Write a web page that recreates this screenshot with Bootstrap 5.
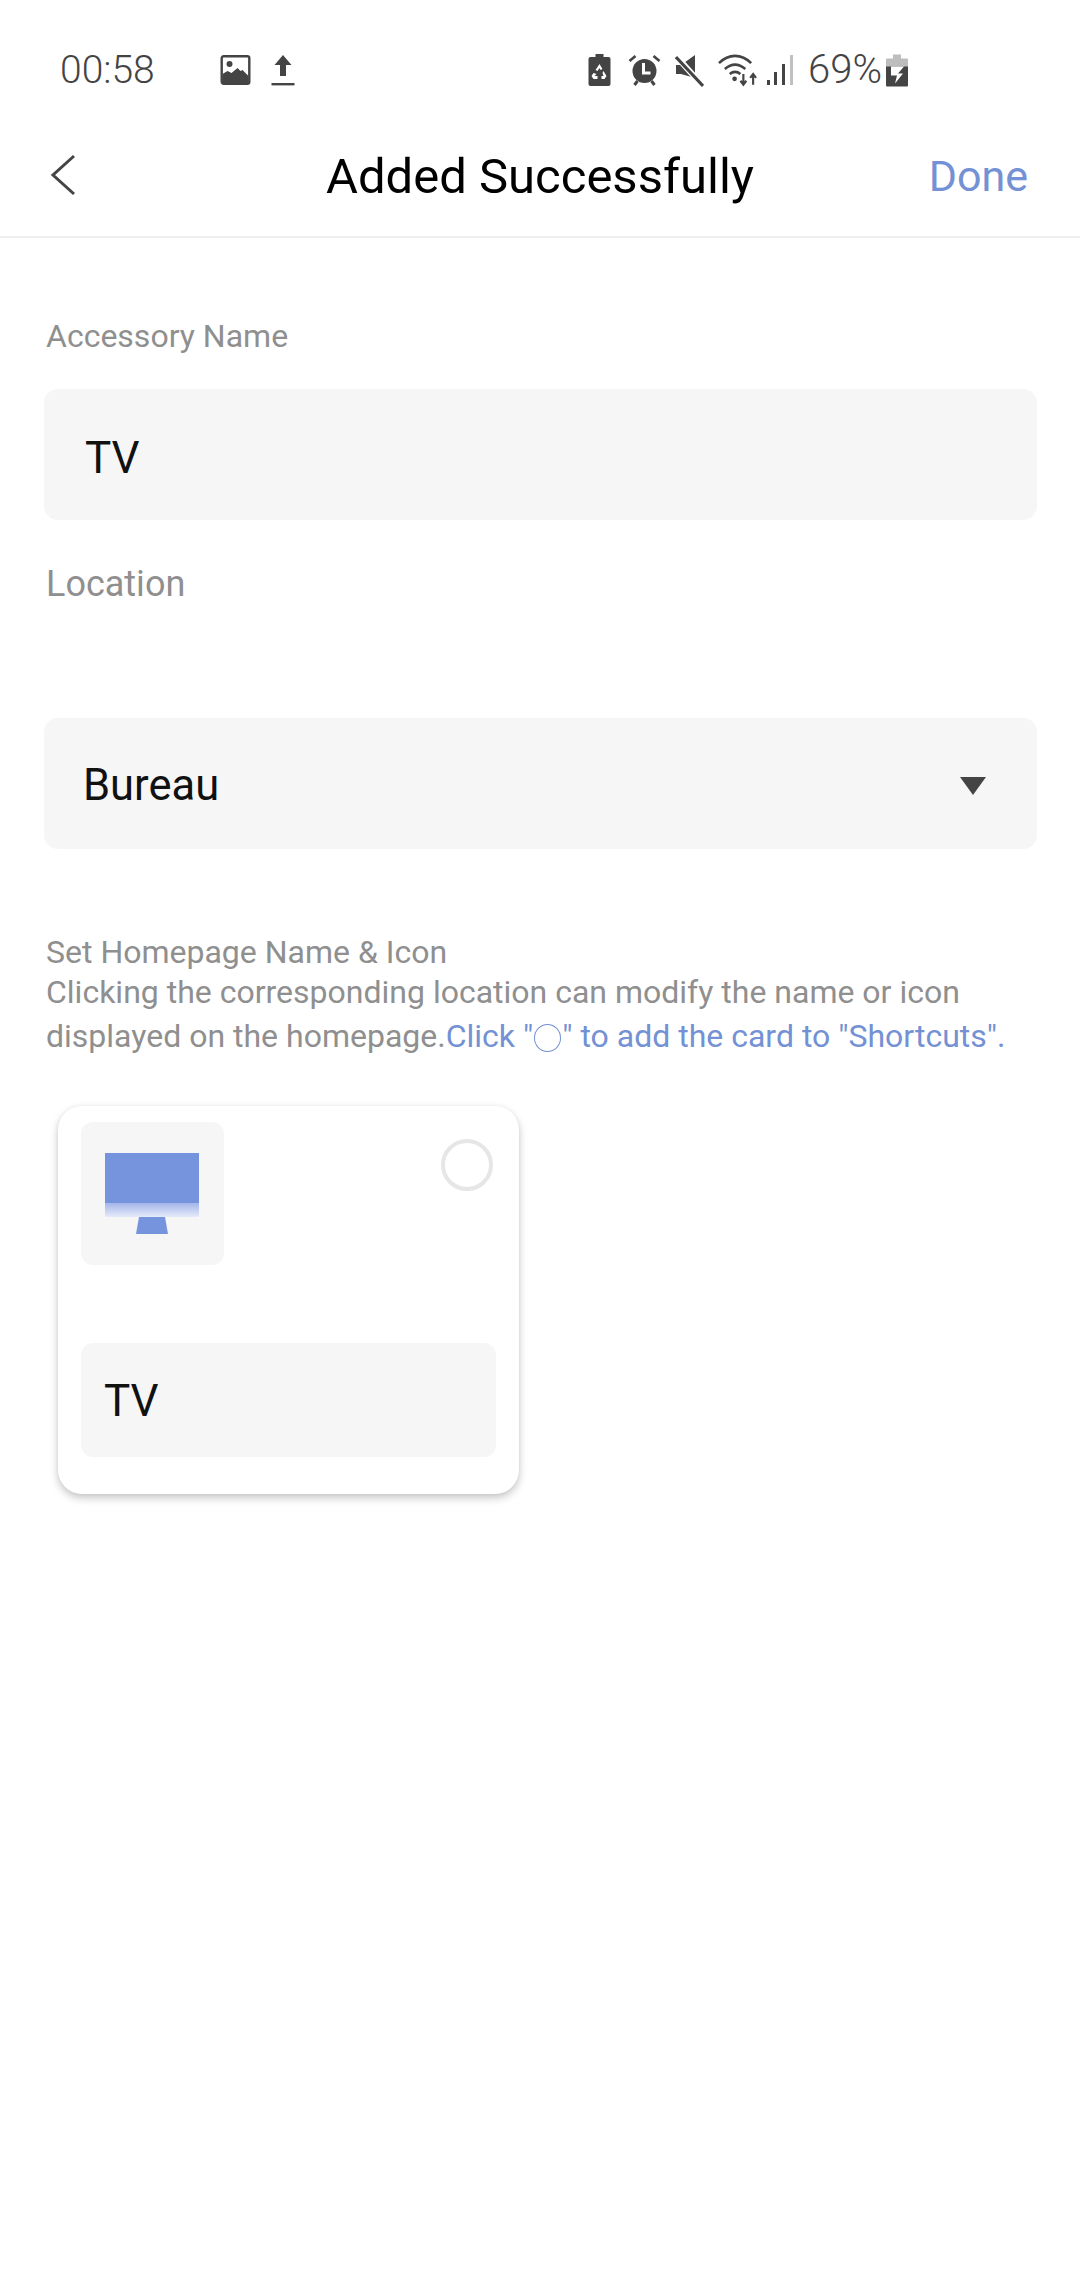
<!doctype html>
<html lang="en">
<head>
<meta charset="utf-8">
<title>Added Successfully</title>
<link href="https://cdn.jsdelivr.net/npm/bootstrap@5.3.0/dist/css/bootstrap.min.css" rel="stylesheet">
<style>
body{font-family:Roboto,"Liberation Sans",sans-serif;background:#fff;color:#000;width:1080px;height:2280px;overflow:hidden}
.sbar{height:70px;margin-top:35px;padding-left:60px;color:#444}
.sbar svg{display:block;flex:none}
.clock{font-size:39px;line-height:70px;width:160px;font-weight:300}
.pct{font-size:40px;line-height:70px;width:78px;margin-left:14px;font-weight:300}
.ic-up{margin-left:20px}
.spacer{width:293px}
.ic-alarm{margin-left:17px}
.ic-mute{margin-left:14px}
.ic-wifi{margin-left:14px}
.ic-sig{margin-left:9px}
.topbar{height:133px;border-bottom:2px solid #eeeeee;padding:8px 52px 0 50px}
.topbar h1{font-size:49px;font-weight:400;margin:0;position:absolute;left:0;right:0;text-align:center;pointer-events:none;line-height:133px;top:5px}
.topbar .wrap-back{width:26px}
.done{font-size:43px;color:#7391d4;text-decoration:none;line-height:125px;padding-top:3px}
.main{padding:0 43px 0 44px}
.lab{color:#8f8f8f;margin-left:2px}
.lab1{font-size:32px;line-height:40px;margin-top:78px;margin-bottom:33px}
.lab2{font-size:36px;line-height:44px;margin-top:42px;margin-bottom:112px}
.fieldbox{background:#f6f6f6;border-radius:14px;height:131px;padding:4px 39px 0;font-size:43.5px;color:#111}
.fieldbox.tv-val{padding-left:41px;padding-top:6px;font-size:44px}
.caret-ic{margin-right:12px}
.hint{font-size:32px;line-height:44px;color:#8f8f8f;margin:85px 0 0 2px;width:1000px}
.hint p{margin:0}
.hint .l1{line-height:36px}
.hint .blue{color:#7391d4}
.hint .ring{display:inline-block;width:27px;height:28px;border:1.5px solid #7391d4;border-radius:50%;vertical-align:-5px;margin:0 1px}
.acc{width:461px;height:388px;margin:48px 0 0 14px;padding:16px 23px 0;background:#fff;border-radius:24px;box-shadow:0 4px 8px rgba(0,0,0,.22),0 0 4px rgba(0,0,0,.05)}
.thumb{width:143px;height:143px;background:#f6f6f6;border-radius:12px}
.thumb svg{margin-right:2px}
.pick{width:52px;height:52px;border:4px solid #e6e6e6;border-radius:50%;margin:17px 3px 0 0}
.namebox{background:#f6f6f6;border-radius:12px;height:114px;margin-top:78px;padding:2px 0 0 23px;font-size:44px;color:#111}
</style>
</head>
<body>
<div class="sbar d-flex align-items-center">
  <span class="clock">00:58</span>
  <svg width="31" height="30" viewBox="0 0 30 30"><rect x="1.2" y="1.2" width="27.6" height="27.6" rx="2" fill="#fff" stroke="#444" stroke-width="2.4"/><circle cx="9" cy="9" r="3" fill="#444"/><path d="M2 28V19l5-3 4 2 6-5 3 3 2-1 6 6v7z" fill="#444"/></svg>
  <svg class="ic-up" width="24" height="32" viewBox="0 0 23 32"><path d="M11.5 1 20 11h-5.5v11h-6V11H3z" fill="#444"/><rect y="29" width="23" height="2.4" fill="#444"/></svg>
  <span class="spacer"></span>
  <svg width="23" height="32" viewBox="0 0 22 32"><path d="M7 0h8v3h5a2 2 0 0 1 2 2v25a2 2 0 0 1-2 2H2a2 2 0 0 1-2-2V5a2 2 0 0 1 2-2h5z" fill="#444"/><path d="M11 10l3 5-2 1-1-2-2 3-2-1zM15 17l3 5-2 3h-3v-3h2l-1-3zM5 19l3 1-2 2h3v3H5l-2-3z" fill="#fff"/></svg>
  <svg class="ic-alarm" width="33" height="32" viewBox="0 0 32 32"><circle cx="16" cy="17" r="12" fill="#444"/><path d="M1 7l6-5M31 7l-6-5" stroke="#444" stroke-width="2.6"/><path d="M6 31l3-4M26 31l-3-4" stroke="#444" stroke-width="3"/><path d="M15 9v10h7" fill="none" stroke="#fff" stroke-width="3"/></svg>
  <svg class="ic-mute" width="29" height="33" viewBox="0 0 29 33"><path d="M1 11h5L20 1v23L6 20H1z" fill="#444"/><path d="M1 2l26 29" stroke="#fff" stroke-width="6"/><path d="M1 3l27 29" stroke="#444" stroke-width="3"/></svg>
  <svg class="ic-wifi" width="40" height="33" viewBox="0 0 41 33"><g fill="none" stroke="#444" stroke-width="2.6"><path d="M1 9c10-10 23-10 33 0"/><path d="M7 15c7-6 14-6 21 0"/><path d="M12 20c4-3 7-3 11 0"/></g><circle cx="17" cy="25" r="2.4" fill="#444"/><path d="M26 20v10m-3-3 3 4 3-4M36 31V21m-3 3 3-4 3 4" fill="none" stroke="#444" stroke-width="2.2"/></svg>
  <svg class="ic-sig" width="27" height="32" viewBox="0 0 27 32"><g fill="#444"><rect x="0" y="26" width="3" height="5"/><rect x="7" y="18" width="3" height="13"/><rect x="15" y="10" width="3" height="21"/></g><rect x="23" y="1" width="3" height="30" fill="#c0c0c0"/></svg>
  <span class="pct">69%</span>
  <svg width="22" height="33" viewBox="0 0 22 32"><path d="M7 0h8v4h6a1 1 0 0 1 1 1v8H0V5a1 1 0 0 1 1-1h6z" fill="#bdbdbd"/><path d="M0 12h22v19a1 1 0 0 1-1 1H1a1 1 0 0 1-1-1z" fill="#444"/><path d="M5 12h13l-6 7h5l-8 10 2-8H5z" fill="#fff"/></svg>
</div>
<div class="topbar d-flex align-items-center justify-content-between position-relative">
  <div class="wrap-back"><svg width="26" height="42" viewBox="0 0 26 42" class="d-block"><path d="M24 2 3 21l21 19" fill="none" stroke="#444" stroke-width="3"/></svg></div>
  <h1>Added Successfully</h1>
  <a class="done" href="#">Done</a>
</div>
<div class="main">
  <div class="lab lab1">Accessory Name</div>
  <div class="fieldbox tv-val d-flex align-items-center">TV</div>
  <div class="lab lab2">Location</div>
  <div class="fieldbox d-flex align-items-center justify-content-between">
    <span>Bureau</span>
    <svg class="caret-ic" width="26" height="18" viewBox="0 0 26 18"><path d="M0 0h26L13 18z" fill="#444"/></svg>
  </div>
  <div class="hint">
    <p class="l1">Set Homepage Name &amp; Icon</p>
    <p>Clicking the corresponding location can modify the name or icon<br>displayed on the homepage.<span class="blue">Click "<span class="ring"></span>" to add the card to "Shortcuts".</span></p>
  </div>
  <div class="acc">
    <div class="d-flex justify-content-between align-items-start">
      <div class="thumb d-flex align-items-center justify-content-center">
        <svg width="94" height="82" viewBox="0 0 94 82" class="d-block">
          <defs><linearGradient id="fade" x1="0" y1="0" x2="0" y2="1"><stop offset="0" stop-color="#a3b6ea"/><stop offset="1" stop-color="#e6ebf9"/></linearGradient></defs>
          <rect width="94" height="50" fill="#7694de"/>
          <rect y="50" width="94" height="14" fill="url(#fade)"/>
          <path d="M34 64h26l3 17H31z" fill="#7694de"/>
        </svg>
      </div>
      <div class="pick"></div>
    </div>
    <div class="namebox d-flex align-items-center">TV</div>
  </div>
</div>
<script src="https://cdn.jsdelivr.net/npm/bootstrap@5.3.0/dist/js/bootstrap.bundle.min.js"></script>
</body>
</html>
